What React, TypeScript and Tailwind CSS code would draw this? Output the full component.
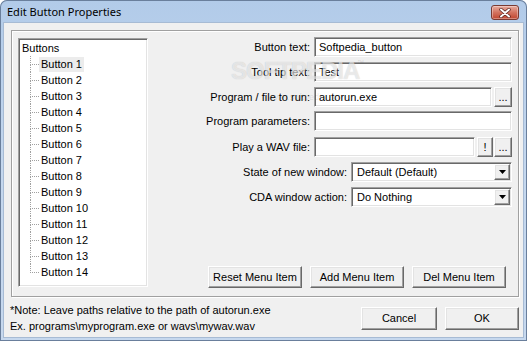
const sans = "font-['Liberation_Sans',Arial,sans-serif]"

const field =
  "border border-t-[#a0a0a0] border-l-[#a0a0a0] border-b-white border-r-white bg-white shadow-[inset_1px_1px_0_#696969,inset_-1px_-1px_0_#e3e3e3]"

const raised =
  "border border-t-white border-l-white border-b-[#696969] border-r-[#696969] bg-[#f0f0f0] shadow-[inset_-1px_-1px_0_#a0a0a0,inset_1px_1px_0_#e3e3e3]"

const buttons = Array.from({ length: 14 }, (_, i) => `Button ${i + 1}`)

function TreeItem({ label, last, selected }: { label: string; last: boolean; selected?: boolean }) {
  return (
    <div className="flex h-[16px]">
      <div className="ml-[10px] flex w-[9px] shrink-0 flex-col">
        <div className="h-[9px] border-b border-l border-dotted border-[#a0a0a0]" />
        <div className={last ? "h-[7px]" : "h-[7px] border-l border-dotted border-[#a0a0a0]"} />
      </div>
      <span
        className={
          selected
            ? "mt-[1px] h-[15px] bg-[#ececec] px-[2px] leading-[15px]"
            : "mt-[1px] h-[15px] px-[2px] leading-[15px]"
        }
      >
        {label}
      </span>
    </div>
  )
}

function Row({ label, wide, className, children }: { label: string; wide?: boolean; className: string; children: React.ReactNode }) {
  return (
    <div className={`flex h-[20px] items-center ${className}`}>
      <div className={wide ? "w-[203px] shrink-0 pr-[4px] text-right" : "w-[166px] shrink-0 pr-[4px] text-right"}>
        {label}
      </div>
      {children}
    </div>
  )
}

function Combo({ value }: { value: string }) {
  return (
    <div className={`${field} flex h-[20px] flex-1 items-center p-[1px]`}>
      <span className="flex-1 pl-[4px]">{value}</span>
      <div className={`${raised} flex h-full w-[16px] items-center justify-center`}>
        <svg width="7" height="4" viewBox="0 0 7 4">
          <path d="M0 0h7L3.5 4z" fill="#000" />
        </svg>
      </div>
    </div>
  )
}

function SmallButton({ label, w }: { label: string; w: string }) {
  return (
    <div className={`${raised} flex h-[20px] ${w} shrink-0 items-center justify-center leading-none`}>
      {label}
    </div>
  )
}

export default function App() {
  return (
    <div className={`relative h-[341px] w-[527px] overflow-hidden rounded-t-[7px] bg-gradient-to-b from-[#b2cbe9] via-[#c4d7ee] to-[#c6d8ee] shadow-[inset_0_0_0_1px_#6a7f9c] ${sans}`}>
      {/* title bar */}
      <div className="flex h-[23px] items-start">
        <span className="ml-[7px] mt-[4px] font-['Noto_Sans',sans-serif] text-[11px] leading-[16px] text-black">
          Edit Button Properties
        </span>
        <div className="ml-auto mr-[8px] mt-[5px] flex h-[15px] w-[28px] items-center justify-center rounded-[3px] border border-[#7a3a32] bg-gradient-to-b from-[#e7ab9f] via-[#d3725f] to-[#c0432d] shadow-[inset_0_0_0_1px_rgba(255,255,255,0.35)]">
          <svg width="12" height="10" viewBox="0 0 12 10">
            <path d="M2 1.5l8 7M10 1.5l-8 7" stroke="#5b2620" strokeWidth="3.4" strokeLinecap="round" />
            <path d="M2 1.5l8 7M10 1.5l-8 7" stroke="#fff" strokeWidth="1.9" strokeLinecap="round" />
          </svg>
        </div>
      </div>

      {/* client area */}
      <div className="mx-[4px] flex h-[314px] flex-col bg-[#f0f0f0] text-[11px] leading-[13px] text-black shadow-[0_0_0_1px_#a7bbd4]">
        <div className="ml-[7px] mt-[7px] flex h-[267px] w-[508px] border border-[#a0a0a0] shadow-[inset_1px_1px_0_#fff,1px_1px_0_#fff]">
          {/* tree view */}
          <div className={`${field} ml-[6px] mt-[7px] h-[249px] w-[130px] shrink-0 overflow-hidden p-[1px]`}>
            <div className="flex h-[16px] items-center pl-[2px]">Buttons</div>
            {buttons.map((b, i) => (
              <TreeItem key={b} label={b} last={i === buttons.length - 1} selected={i === 0} />
            ))}
          </div>

          {/* form */}
          <div className="flex flex-1 flex-col pb-[8px] pr-[6px] pt-[6px]">
            <Row label="Button text:" className="">
              <div className={`${field} flex h-[20px] flex-1 items-center pl-[4px]`}>Softpedia_button</div>
            </Row>
            <Row label="Tool tip text:" className="mt-[5px]">
              <div className={`${field} flex h-[20px] flex-1 items-center pl-[4px]`}>Test</div>
            </Row>
            <Row label="Program / file to run:" className="mt-[5px]">
              <div className={`${field} flex h-[20px] flex-1 items-center pl-[4px]`}>autorun.exe</div>
              <div className="ml-[2px]">
                <SmallButton label="..." w="w-[18px]" />
              </div>
            </Row>
            <Row label="Program parameters:" className="mt-[4px]">
              <div className={`${field} h-[20px] flex-1`} />
            </Row>
            <Row label="Play a WAV file:" className="mt-[6px]">
              <div className={`${field} h-[20px] flex-1`} />
              <div className="ml-[2px] flex gap-[1px]">
                <SmallButton label="!" w="w-[16px]" />
                <SmallButton label="..." w="w-[18px]" />
              </div>
            </Row>
            <Row label="State of new window:" wide className="mt-[5px]">
              <Combo value="Default (Default)" />
            </Row>
            <Row label="CDA window action:" wide className="mt-[5px]">
              <Combo value="Do Nothing" />
            </Row>

            <div className="mr-[6px] mt-auto flex justify-end gap-[8px]">
              {["Reset Menu Item", "Add Menu Item", "Del Menu Item"].map((t) => (
                <div key={t} className={`${raised} flex h-[22px] w-[94px] items-center justify-center`}>
                  {t}
                </div>
              ))}
            </div>
          </div>
        </div>

        {/* footer */}
        <div className="flex flex-1">
          <div className="ml-[6px] mt-[5px] leading-[16px]">
            <div>*Note: Leave paths relative to the path of autorun.exe</div>
            <div>Ex. programs\myprogram.exe or wavs\mywav.wav</div>
          </div>
          <div className="ml-auto mr-[4px] mt-[10px] flex gap-[8px]">
            <div className={`${raised} flex h-[23px] w-[76px] items-center justify-center`}>Cancel</div>
            <div className={`${raised} flex h-[23px] w-[74px] items-center justify-center`}>OK</div>
          </div>
        </div>
      </div>

      {/* softpedia watermark */}
      <div className="pointer-events-none absolute left-[231px] top-[57px] text-[24px] font-bold leading-[28px] tracking-[-1px] text-white/60 [text-shadow:0_0_1px_rgba(0,0,0,0.22)]">
        SOFTPEDIA
      </div>
      <div className="pointer-events-none absolute left-[357px] top-[59px] text-[7px] leading-[8px] text-black/15">™</div>
      <div className="pointer-events-none absolute left-[268px] top-[92px] text-[9px] leading-[10px] text-black/10">
        www.softpedia.com
      </div>
    </div>
  )
}
